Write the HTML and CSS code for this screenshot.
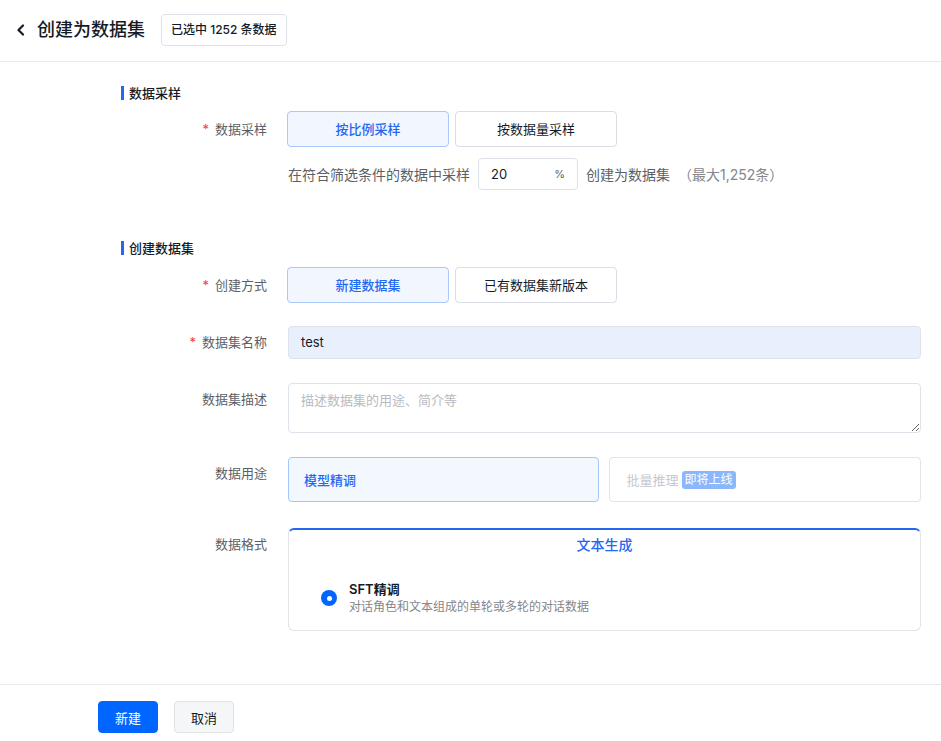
FILE: index.html
```html
<!DOCTYPE html>
<html lang="zh-CN">
<head>
<meta charset="utf-8">
<title>创建为数据集</title>
<link rel="stylesheet" href="styles.css">
</head>
<body>
<div class="header">
  <svg class="back" width="10" height="12" viewBox="0 0 10 12"><path d="M7 1.5 L2.5 6 L7 10.5" fill="none" stroke="#151b26" stroke-width="2.2" stroke-linecap="round" stroke-linejoin="round"/></svg>
  <span class="title">创建为数据集</span>
  <span class="badge">已选中 1252 条数据</span>
</div>

<div class="main">
  <div class="sec-title">数据采样</div>
  <div class="row row-btn">
    <div class="label"><span class="star">*</span>数据采样</div>
    <div class="ctrl">
      <div class="seg">
        <div class="seg-btn active">按比例采样</div>
        <div class="seg-btn">按数据量采样</div>
      </div>
    </div>
  </div>
  <div class="row row-sample">
    <div class="label"></div>
    <div class="ctrl sample">
      <span>在符合筛选条件的数据中采样</span>
      <div class="pct-input"><span class="pct-val">20</span><span class="pct">%</span></div>
      <span>创建为数据集</span>
      <span class="max">（最大1,252条）</span>
    </div>
  </div>

  <div class="sec-title sec2">创建数据集</div>
  <div class="row row-btn">
    <div class="label"><span class="star">*</span>创建方式</div>
    <div class="ctrl">
      <div class="seg">
        <div class="seg-btn active">新建数据集</div>
        <div class="seg-btn">已有数据集新版本</div>
      </div>
    </div>
  </div>
  <div class="row row-name">
    <div class="label"><span class="star">*</span>数据集名称</div>
    <div class="ctrl"><div class="text-input filled">test</div></div>
  </div>
  <div class="row row-desc">
    <div class="label">数据集描述</div>
    <div class="ctrl"><textarea class="textarea" placeholder="描述数据集的用途、简介等"></textarea></div>
  </div>
  <div class="row row-use">
    <div class="label">数据用途</div>
    <div class="ctrl use">
      <div class="use-card active">模型精调</div>
      <div class="use-card disabled">批量推理<span class="tag">即将上线</span></div>
    </div>
  </div>
  <div class="row row-fmt">
    <div class="label">数据格式</div>
    <div class="ctrl">
      <div class="fmt-card">
        <div class="fmt-title">文本生成</div>
        <div class="fmt-item">
          <span class="radio"></span>
          <div class="fmt-text">
            <div class="fmt-name">SFT精调</div>
            <div class="fmt-desc">对话角色和文本组成的单轮或多轮的对话数据</div>
          </div>
        </div>
      </div>
    </div>
  </div>
</div>

<div class="footer">
  <button class="btn primary">新建</button>
  <button class="btn">取消</button>
</div>
</body>
</html>
```

FILE: styles.css
```css
* { box-sizing: border-box; }
html, body { margin: 0; padding: 0; background: #fff; }
body {
  width: 941px;
  font-family: Inter, "Noto Sans CJK SC", sans-serif;
  color: #151b26;
  font-size: 13px;
}
.header {
  height: 62px;
  border-bottom: 1px solid #e8e9eb;
  display: flex;
  align-items: center;
  padding-left: 16px;
  padding-bottom: 1px;
}
.back { margin-right: 11px; }
.title { font-size: 18px; font-weight: 500; line-height: 24px; }
.badge {
  margin-left: 16px;
  height: 32px;
  line-height: 30px;
  padding: 0 9px;
  border: 1px solid #dfe2e8;
  border-radius: 4px;
  font-size: 12px;
  font-weight: 500;
}
.main { padding: 21px 20px 0 0; }
.sec-title {
  margin-left: 121px;
  padding-left: 5px;
  border-left: 3px solid #2468f2;
  line-height: 14px;
  font-size: 13px;
  font-weight: 500;
  margin-top: 3px;
  margin-bottom: 11px;
}
.sec-title.sec2 { margin-top: 51px; margin-bottom: 12px; }
.row { display: flex; align-items: flex-start; }
.label {
  width: 288px;
  flex: none;
  padding-right: 21px;
  text-align: right;
  line-height: 32px;
  color: #5c5f66;
}
.star { color: #f33e3e; margin-right: 6px; font-size: 13px; }
.row-btn .label { line-height: 36px; }
.ctrl { flex: 1; min-width: 0; }
.seg { display: flex; gap: 6px; margin-left: -1px; }
.seg-btn {
  width: 162px;
  height: 36px;
  line-height: 34px;
  text-align: center;
  border: 1px solid #dadde3;
  border-radius: 4px;
  color: #151b26;
}
.seg-btn.active {
  background: #f1f6ff;
  border-color: #a9c8fb;
  color: #2468f2;
  font-weight: 500;
}
.row-sample { margin-top: 11px; }
.sample {
  display: flex;
  align-items: center;
  font-size: 14px;
  color: #5c5f66;
  gap: 8px;
}
.pct-input {
  width: 100px;
  height: 32px;
  border: 1px solid #dfe2e8;
  border-radius: 4px;
  display: flex;
  align-items: center;
  justify-content: space-between;
  padding: 0 12px;
  color: #151b26;
}
.pct-val { font-size: 13px; }
.pct { font-size: 11px; color: #5c5f66; }
.max { color: #84868c; }
.row-name { margin-top: 23px; }
.text-input {
  height: 33px;
  line-height: 31px;
  padding: 0 12px;
  border: 1px solid #dfe2e8;
  border-radius: 4px;
}
.text-input.filled { background: #e8f0fd; }
.row-desc { margin-top: 24px; }
.textarea {
  display: block;
  width: 100%;
  height: 50px;
  border: 1px solid #dfe2e8;
  border-radius: 4px;
  padding: 6px 12px;
  font-family: inherit;
  font-size: 13px;
  color: #151b26;
  resize: vertical;
  outline: none;
}
.textarea::placeholder { color: #b8babf; }
.row-use { margin-top: 24px; }
.use { display: flex; gap: 10px; }
.use-card {
  flex: 1;
  height: 45px;
  padding: 0 15px;
  border: 1px solid #e0e3e8;
  border-radius: 4px;
  display: flex;
  align-items: center;
}
.use-card.active {
  background: #f3f8ff;
  border-color: #a4c6fb;
  color: #2468f2;
  font-weight: 500;
}
.use-card.disabled { color: #c7c9cd; padding-left: 17px; }
.tag {
  margin-left: 3px;
  background: #8ab8fa;
  color: #fff;
  font-size: 12px;
  line-height: 18px;
  padding: 0 3px;
  border-radius: 3px;
}
.row-fmt { margin-top: 26px; }
.fmt-card {
  border: 1px solid #e0e3e8;
  border-top: 2px solid #2468f2;
  border-radius: 6px;
  height: 103px;
}
.fmt-title {
  text-align: center;
  color: #2468f2;
  font-size: 14px;
  font-weight: 500;
  line-height: 30px;
}
.fmt-item {
  display: flex;
  align-items: center;
  padding-left: 32px;
  margin-top: 20px;
}
.radio {
  width: 16px;
  height: 16px;
  border-radius: 50%;
  background: #0066ff;
  position: relative;
  margin-right: 12px;
  flex: none;
}
.radio::after {
  content: "";
  position: absolute;
  left: 5.5px;
  top: 5.5px;
  width: 5px;
  height: 5px;
  border-radius: 50%;
  background: #fff;
}
.fmt-name { font-size: 13px; font-weight: 600; line-height: 18px; }
.fmt-desc { font-size: 12px; color: #84868c; line-height: 18px; }
.footer {
  margin-top: 53px;
  border-top: 1px solid #e8e9eb;
  padding: 16px 0 0 98px;
  display: flex;
  gap: 16px;
}
.btn {
  width: 60px;
  height: 32px;
  border: 1px solid #e0e3e8;
  border-radius: 4px;
  background: #f5f6f8;
  font-family: inherit;
  font-size: 13px;
  color: #151b26;
  padding: 0;
}
.btn.primary {
  background: #0066ff;
  border-color: #0066ff;
  color: #fff;
}
```
